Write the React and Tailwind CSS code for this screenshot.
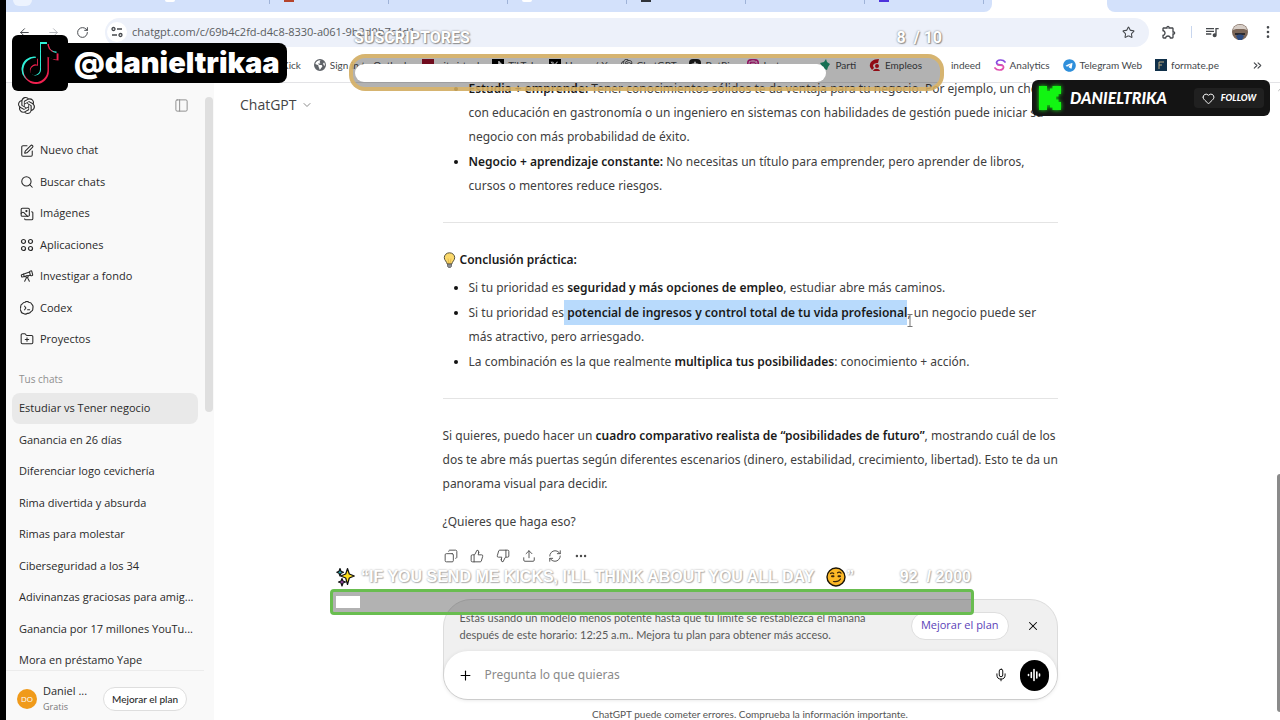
import React, { useState } from 'react';
import {
  ArrowLeft,
  ArrowRight,
  RotateCw,
  Star,
  EllipsisVertical,
  Search,
  SquarePen,
  Images,
  Telescope,
  FolderPlus,
  PanelLeft,
  ChevronDown,
  ChevronUp,
  ChevronsRight,
  Copy,
  ThumbsUp,
  ThumbsDown,
  Upload,
  RefreshCw,
  Ellipsis,
  Plus,
  Mic,
  X,
  Heart,
} from 'lucide-react';
import { FaTiktok, FaXTwitter, FaInstagram, FaTelegram, FaEarthAmericas } from 'react-icons/fa6';
import { SiOpenai } from 'react-icons/si';
import { MdOutlineExtension, MdOutlineQueueMusic } from 'react-icons/md';

const history = [
  'Estudiar vs Tener negocio',
  'Ganancia en 26 días',
  'Diferenciar logo cevichería',
  'Rima divertida y absurda',
  'Rimas para molestar',
  'Ciberseguridad a los 34',
  'Adivinanzas graciosas para amig...',
  'Ganancia por 17 millones YouTu...',
  'Mora en préstamo Yape',
];

function AppsIcon() {
  return (
    <svg className="w-[14px] h-[14px]" viewBox="0 0 14 14" fill="none" stroke="currentColor" strokeWidth="1.2">
      <circle cx="3.5" cy="3.5" r="2" />
      <circle cx="10.5" cy="3.5" r="2" />
      <circle cx="3.5" cy="10.5" r="2" />
      <circle cx="10.5" cy="10.5" r="2" />
    </svg>
  );
}

function CodexIcon() {
  return (
    <svg className="w-[14px] h-[14px]" viewBox="0 0 14 14" fill="none" stroke="currentColor" strokeWidth="1.1" strokeLinecap="round" strokeLinejoin="round">
      <path d="M5 1.2c1-.8 2.800-.8 3.800 0 1.500 0 2.700.8 3.100 2.200 1 .9 1.400 2.400.9 3.700.3 1.500-.4 2.900-1.700 3.500-.7 1.300-2.100 2-3.600 1.700-1.100.9-2.700 1-3.900.2-1.400-.1-2.500-1.200-2.700-2.600C.1 8.900-.1 7.300.7 6.100.5 4.600 1.200 3.200 2.500 2.700 3 1.800 4 1.200 5 1.200z" />
      <path d="M4.600 5.200 5.900 7 4.600 8.800M7.600 8.800h2" />
    </svg>
  );
}

function SettingsIcon() {
  return (
    <svg className="w-3 h-3" viewBox="0 0 12 12" fill="none" stroke="currentColor" strokeWidth="1.3">
      <circle cx="2.5" cy="3" r="1.5" />
      <circle cx="9.5" cy="9" r="1.5" />
      <path d="M6 3h5M1 9h5" />
    </svg>
  );
}

function VoiceIcon() {
  return (
    <svg className="w-[14px] h-[14px]" viewBox="0 0 14 14" stroke="currentColor" strokeWidth="1.6" strokeLinecap="round">
      <path d="M1.500 6.500v1M4.300 4.500v5M7 1.500v11M9.800 4v6M12.500 6v2" />
    </svg>
  );
}

function Bulb() {
  return (
    <svg className="w-[13px] h-4" viewBox="0 0 13 16">
      <path d="M6.500.8C3.400.8 1.300 3 1.300 5.700c0 2.500 2.400 3.800 2.900 6.300h4.600c.5-2.500 2.900-3.800 2.900-6.300C11.700 3 9.600.8 6.500.8z" fill="#fbd96c" stroke="#57523c" strokeWidth="1" />
      <path d="M5 6.500 6 12h1l1-5.500" fill="none" stroke="#d9a437" strokeWidth=".6" />
      <path d="M4.500 12h4v2.200L7.500 15.500h-2L4.500 14.200z" fill="#8b8f92" stroke="#444" strokeWidth=".6" />
    </svg>
  );
}

function Sparkles() {
  return (
    <svg className="w-[19px] h-5" viewBox="0 0 19 20" stroke="#111" strokeWidth="1.2" strokeLinejoin="round">
      <path d="M11.500 1.500 13.300 7l5 2-5 2-1.800 6.500L9.700 11l-5-2 5-2z" fill="#ffe11f" />
      <path d="M4 1.500 5 4.200l2.500 1L5 6.200 4 9 3 6.200.8 5.200 3 4.200z" fill="#35b8c6" />
      <path d="M6 11.500l1 2.500 2.500 1-2.500 1-1 3-1-3-2.500-1 2.500-1z" fill="#b04fc4" />
    </svg>
  );
}

function Smirk() {
  return (
    <svg className="w-5 h-5" viewBox="0 0 20 20">
      <circle cx="10" cy="10" r="9" fill="#fcb826" stroke="#1d1606" strokeWidth="1.4" />
      <g fill="none" stroke="#3b2509" strokeWidth="1.2" strokeLinecap="round">
        <path d="M4.500 6.500c1-.8 2.300-.8 3.200 0M11.500 5.800c1-.8 2.600-.6 3.500.4M7.500 14.500c2.500.5 5.500 0 7-2.500" />
        <path d="M6 9.200h1.500M12.500 9.200h1.500" strokeWidth="2" />
      </g>
    </svg>
  );
}

function KickLogo() {
  return (
    <svg className="w-7 h-7 drop-shadow-[0_0_2px_#16f016]" viewBox="0 0 28 28">
      <path d="M3 2h8v5h3V4.500h2.500V2H25v8h-2.500v2.500H20v3h2.500V18H25v8h-8.500v-2.500H14V21h-3v5H3z" fill="#12f512" />
    </svg>
  );
}

const nav = [
  { label: 'Nuevo chat', icon: <SquarePen size={14} strokeWidth={1.8} /> },
  { label: 'Buscar chats', icon: <Search size={14} strokeWidth={1.8} /> },
  { label: 'Imágenes', icon: <Images size={14} strokeWidth={1.8} className="-scale-x-100" /> },
  { label: 'Aplicaciones', icon: <AppsIcon /> },
  { label: 'Investigar a fondo', icon: <Telescope size={14} strokeWidth={1.8} /> },
  { label: 'Codex', icon: <CodexIcon /> },
  { label: 'Proyectos', icon: <FolderPlus size={14} strokeWidth={1.8} /> },
];

const bookmarks = [
  { label: 'Kick', icon: null },
  { label: 'Sign in to Outlook', icon: <FaEarthAmericas size={12} className="text-[#5f6368]" /> },
  { label: 'nit.virtual', icon: <span className="w-3 h-3 bg-[#a3122c]" /> },
  { label: 'TikTok', icon: <span className="w-3 h-3 bg-black text-white flex items-center justify-center"><FaTiktok size={8} /></span> },
  { label: 'Home / X', icon: <span className="w-3 h-3 bg-black text-white flex items-center justify-center"><FaXTwitter size={9} /></span> },
  { label: 'ChatGPT', icon: <SiOpenai size={12} /> },
  { label: 'BotRix', icon: <span className="w-3 h-3 rounded-sm bg-[#222] text-white flex items-center justify-center"><Star size={8} fill="white" /></span> },
  { label: 'Instagram', icon: <span className="w-3 h-3 rounded-sm bg-[#d0208f] text-white flex items-center justify-center"><FaInstagram size={10} /></span> },
  { label: 'Parti', icon: <svg className="w-3 h-3" viewBox="0 0 12 12"><path d="M1 4 5 3 7 0l1 3 3 2-2 3-1 3-3-1-3-1 1-2z" fill="#21a179" /></svg> },
  { label: 'Empleos', icon: <svg className="w-3 h-3" viewBox="0 0 12 12"><path d="M10 0C4 0 0 3 1 8l2 3 2-2-1-2c0-2 2-3 5-3zM6 7a2 2 0 1 1 4 0 2 2 0 0 1-4 0zM4 12c1-3 6-3 7 0z" fill="#d0121f" /></svg> },
  { label: 'indeed', icon: <span className="w-3 h-3" /> },
  { label: 'Analytics', icon: <svg className="w-3 h-3" viewBox="0 0 12 12" fill="none" strokeWidth="1.7" strokeLinecap="round"><path d="M11 3C9 0 3 .5 2.500 3.500 2.500 6 6 6 8 6" stroke="#8a4be0" /><path d="M4 6c3 0 6 0 5.500 2.500C9 11.500 3 12 1 9" stroke="#e04fae" /></svg> },
  { label: 'Telegram Web', icon: <FaTelegram size={13} className="text-[#2f8fdb]" /> },
  { label: 'formate.pe', icon: <span className="w-3 h-3 bg-[#10304a] flex items-center justify-center"><svg className="w-2 h-2" viewBox="0 0 8 8" fill="none" stroke="#b9a880"><path d="M2 8V1h5M2 4h3" /></svg></span> },
];

// bottoms of the favicons on the background tabs
const tabs = [
  'bg-white rounded-b-full',
  'bg-[#b5442c]',
  'bg-[#d3e1fb]',
  'bg-white rounded-b-full',
  'bg-[#30343a]',
  'bg-[#d3e1fb]',
  'bg-[#4d32dc]',
];

function BrowserChrome() {
  return (
    <header className="shrink-0 border-b border-[#e3e3e6] bg-white text-[#45484c]">
      <div className="flex h-3">
        <div className="w-[986px] shrink-0 flex pl-[7px] rounded-br-lg bg-[#d3e1fb] overflow-hidden">
          <span className="w-6 h-[6px] mr-[127px] rounded-b-full bg-[#edf3fe]" />
          {tabs.map((favicon, i) => (
            <div key={i} className="w-[119px] shrink-0 flex justify-between pl-[6px] pr-2">
              <span className={`w-[10px] h-0.5 ${favicon}`} />
              <span className="w-px h-1 bg-[#9fb3d8]" />
            </div>
          ))}
        </div>
        <div className="w-[115px] bg-white" />
        <div className="flex-1 rounded-bl-lg bg-[#d3e1fb]" />
      </div>
      <div className="flex items-center h-10 pl-3">
        <ArrowLeft size={13} strokeWidth={1.8} />
        <ArrowRight size={13} strokeWidth={1.8} className="ml-4 text-[#b4b7bb]" />
        <RotateCw size={13} strokeWidth={1.8} className="ml-4 mr-4" />
        <div className="flex-1 flex items-center h-[29px] rounded-full bg-[#edf1fa] pl-[2px] pr-[14px]">
          <span className="w-5 h-5 rounded-full bg-white flex items-center justify-center">
            <SettingsIcon />
          </span>
          <input
            aria-label="Dirección"
            className="flex-1 ml-[5px] bg-transparent outline-none text-[11px] text-[#5a5d61]"
            defaultValue="chatgpt.com/c/69b4c2fd-d4c8-8330-a061-9b2d0b7c4d1"
          />
          <Star size={13} strokeWidth={2} />
        </div>
        <MdOutlineExtension size={16} className="ml-3" />
        <span className="w-px h-3 bg-[#c8d6ee] ml-[14px] mr-3" />
        <MdOutlineQueueMusic size={16} />
        <svg className="w-4 h-4 ml-3" viewBox="0 0 16 16">
          <circle cx="8" cy="8" r="8" fill="#7b6658" />
          <path d="M1 6c1-7 13-7 14 0l-3-1H4z" fill="#d6cdc6" />
          <path d="M3 9h10v2H3z" fill="#2c2b30" />
          <path d="M4 12c2-2 6-2 8 0l-2 4H6z" fill="#2d4b80" />
        </svg>
        <EllipsisVertical size={16} className="ml-3 mr-1" />
      </div>
      <div className="flex items-center h-[30px] pb-1 pl-[276px] pr-4">
        <nav className="flex-1 flex items-center justify-between font-['Lato'] text-[10px] leading-4 whitespace-nowrap">
          {bookmarks.map((b) => (
            <a key={b.label} href="#" className="flex items-center gap-1">
              {b.icon}
              {b.label}
            </a>
          ))}
        </nav>
        <ChevronsRight size={13} className="ml-8" />
      </div>
    </header>
  );
}

function Sidebar({ active, onSelect }) {
  return (
    <aside className="w-[208px] shrink-0 flex bg-[#f9f9f9] text-[#2a2a2a]">
      <div className="flex-1 min-w-0 flex flex-col">
        <div className="flex items-center justify-between pt-[14px] pl-3 pr-[15px] mb-[21px]">
          <SiOpenai size={17} />
          <button type="button" aria-label="Cerrar barra lateral" className="text-[#8b8b8b]">
            <PanelLeft size={15} strokeWidth={1.5} />
          </button>
        </div>
        <nav className="grid auto-rows-fr h-[220px] text-[11px] shrink-0">
          {nav.map((item) => (
            <a key={item.label} href="#" className="flex items-center gap-[6px] pl-[14px]">
              {item.icon}
              {item.label}
            </a>
          ))}
        </nav>
        <h2 className="text-[10px] leading-4 text-[#8f8f8f] pl-[13px] mt-4 mb-[6px]">Tus chats</h2>
        <div className="grid grid-cols-1 auto-rows-fr h-[283px] text-[11px] px-[6px] shrink-0">
          {history.map((title) => (
            <button
              key={title}
              type="button"
              onClick={() => onSelect(title)}
              className={`text-left whitespace-nowrap pl-[7px] rounded-lg ${title === active ? 'bg-[#e9e9e9]' : ''}`}
            >
              {title}
            </button>
          ))}
        </div>
        <div className="flex-1 flex items-center border-t border-[#ececec] pt-[7px] pl-[11px] pr-[17px] -mt-[6px] bg-[#f9f9f9]">
          <span className="w-5 h-5 rounded-full bg-[#f09a1a] text-white text-[8px] flex items-center justify-center">DO</span>
          <div className="ml-[6px]">
            <p className="text-[11px] leading-4">Daniel ...</p>
            <p className="text-[9px] leading-4 text-[#777]">Gratis</p>
          </div>
          <button type="button" className="ml-auto h-6 px-2 rounded-full border border-[#dedede] bg-white font-['Lato'] text-[10px] font-medium whitespace-nowrap">
            Mejorar el plan
          </button>
        </div>
      </div>
      <div className="w-[10px] pt-[14px] px-px">
        <div className="h-[315px] rounded-full bg-[#dfdfdf]" />
      </div>
    </aside>
  );
}

function Message() {
  return (
    <article className="font-['Noto_Sans'] text-[12px] leading-6 whitespace-nowrap text-[#404040] [&_strong]:font-semibold [&_strong]:text-[#1a1a1a]">
      <ul className="list-disc pl-[26px] space-y-px marker:text-[#111]">
        <li>
          <strong>Estudia + emprende:</strong> Tener conocimientos sólidos te da ventaja para tu negocio. Por ejemplo, un chef
          <br />
          con educación en gastronomía o un ingeniero en sistemas con habilidades de gestión puede iniciar su
          <br />
          negocio con más probabilidad de éxito.
        </li>
        <li>
          <strong>Negocio + aprendizaje constante:</strong> No necesitas un título para emprender, pero aprender de libros,
          <br />
          cursos o mentores reduce riesgos.
        </li>
      </ul>
      <hr className="border-[#e4e4e4] mt-6 mb-[25px]" />
      <h3 className="flex items-center gap-1 font-semibold text-[#1a1a1a] mb-1">
        <Bulb />
        Conclusión práctica:
      </h3>
      <ul className="list-disc pl-[26px] space-y-px marker:text-[#111]">
        <li>
          Si tu prioridad es <strong>seguridad y más opciones de empleo</strong>, estudiar abre más caminos.
        </li>
        <li>
          Si tu prioridad es
          <mark className="bg-[#b8dafc] py-1"> <strong>potencial de ingresos y control total de tu vida profesional</strong></mark>, un negocio puede ser
          <br />
          más atractivo, pero arriesgado.
        </li>
        <li>
          La combinación es la que realmente <strong>multiplica tus posibilidades</strong>: conocimiento + acción.
        </li>
      </ul>
      <hr className="border-[#e4e4e4] mt-6 mb-[25px]" />
      <p>
        Si quieres, puedo hacer un <strong>cuadro comparativo realista de “posibilidades de futuro”</strong>, mostrando cuál de los
        <br />
        dos te abre más puertas según diferentes escenarios (dinero, estabilidad, crecimiento, libertad). Esto te da un
        <br />
        panorama visual para decidir.
      </p>
      <p className="mt-[14px]">¿Quieres que haga eso?</p>
      <div className="flex items-center gap-3 pl-px mt-[15px] text-[#4d4d4d]">
        <button type="button" aria-label="Copiar"><Copy size={14} strokeWidth={1.6} className="-scale-x-100" /></button>
        <button type="button" aria-label="Buena respuesta"><ThumbsUp size={14} strokeWidth={1.6} /></button>
        <button type="button" aria-label="Mala respuesta"><ThumbsDown size={14} strokeWidth={1.6} /></button>
        <button type="button" aria-label="Compartir"><Upload size={14} strokeWidth={1.6} /></button>
        <button type="button" aria-label="Reintentar"><RefreshCw size={14} strokeWidth={1.6} /></button>
        <button type="button" aria-label="Más"><Ellipsis size={14} strokeWidth={2.2} /></button>
      </div>
    </article>
  );
}

function Composer() {
  const [text, setText] = useState('');

  return (
    <div className="rounded-t-[28px] rounded-b-[25px] border border-[#dcdcdc] bg-[#f0f0f0]">
      <div className="flex items-center h-[51px] pl-4 pr-[17px]">
        <p className="flex-1 font-['Lato'] text-[11px] leading-[17px] whitespace-nowrap text-[#5a5a5a]">
          Estás usando un modelo menos potente hasta que tu límite se restablezca el mañana
          <br />
          después de este horario: 12:25 a.m.. Mejora tu plan para obtener más acceso.
        </p>
        <button type="button" className="h-7 px-[9px] rounded-full border border-[#dedede] bg-white text-[11px] font-medium text-[#5b3fb8] whitespace-nowrap">
          Mejorar el plan
        </button>
        <button type="button" aria-label="Cerrar" className="ml-[17px]">
          <X size={14} strokeWidth={1.8} />
        </button>
      </div>
      <div className="flex items-center h-12 pl-[14px] pr-2 rounded-[24px] bg-white shadow-[0_1px_4px_rgba(0,0,0,0.12)]">
        <Plus size={15} strokeWidth={1.8} />
        <input
          aria-label="Pregunta lo que quieras"
          className="flex-1 ml-3 bg-transparent outline-none font-['Noto_Sans'] text-[12px] placeholder:text-[#8a8a8a]"
          placeholder="Pregunta lo que quieras"
          value={text}
          onChange={(e) => setText(e.target.value)}
        />
        <Mic size={14} strokeWidth={1.6} />
        <button type="button" aria-label="Usar voz" className="ml-3 w-[29px] h-[31px] rounded-full bg-black text-white flex items-center justify-center">
          <VoiceIcon />
        </button>
      </div>
    </div>
  );
}

// Stream widgets that float over the desktop capture
function Overlays() {
  return (
    <>
      <div className="absolute left-3 top-[35px] flex items-center">
        <div className="relative w-14 h-14 rounded-md bg-black flex items-center justify-center">
          <FaTiktok size={40} className="absolute -translate-x-px -translate-y-px text-[#2ff0d8]" />
          <FaTiktok size={40} className="absolute translate-x-px translate-y-px text-[#f0204f]" />
          <FaTiktok size={38} className="absolute text-black" />
        </div>
        <span className="h-10 flex items-center pl-[6px] pr-[7px] rounded-r-lg bg-black text-white font-['Inter'] font-black text-[29px]">
          @danieltrikaa
        </span>
      </div>

      <div className="absolute left-[349px] top-[26px] w-[595px]">
        <div className="flex justify-between pl-[5px] pr-[2px] h-7 font-['Roboto'] font-bold text-[16px] leading-6 text-white [text-shadow:0_0_2px_#777,1px_1px_1px_#999]">
          <span>SUSCRIPTORES</span>
          <span className="whitespace-pre">8  / 10</span>
        </div>
        <div className="h-[37px] rounded-[16px] border-4 border-[#dcb464]/85 bg-black/30 pt-[6px] pl-[2px]">
          <div className="w-[471px] h-[18px] rounded-[9px] bg-white" />
        </div>
      </div>

      <div className="absolute left-[1032px] top-20 h-9 w-[238px] rounded-md bg-[#141414] text-white flex items-center pl-1 pr-[6px] font-['Lato'] font-black italic">
        <KickLogo />
        <span className="ml-[6px] text-[16px]">DANIELTRIKA</span>
        <button type="button" className="ml-auto w-[70px] h-5 rounded bg-[#202020] flex items-center justify-center gap-[6px] text-[9px]">
          <Heart size={13} strokeWidth={1.8} />
          FOLLOW
        </button>
      </div>

      <div className="absolute left-[330px] top-[565px] w-[644px]">
        <div className="flex items-center justify-between pl-[6px] pr-[3px] h-6 font-['Liberation_Sans'] font-bold text-[16px] whitespace-nowrap text-white [text-shadow:0_0_2px_#999,1px_1px_1px_#bbb]">
          <span className="flex items-center">
            <Sparkles />
            <span className="ml-[6px] mr-3">“IF YOU SEND ME KICKS, I'LL THINK ABOUT YOU ALL DAY</span>
            <Smirk />
            <span>”</span>
          </span>
          <span className="whitespace-pre">92  / 2000</span>
        </div>
        <div className="h-[26px] rounded border-[3px] border-[#69bd50] bg-black/30 px-[3px] py-1">
          <div className="w-6 h-3 bg-white" />
        </div>
      </div>

      <svg className="absolute left-[906px] top-[313px] w-2 h-4" viewBox="0 0 8 16" fill="none" stroke="#777">
        <path d="M1.500 1.500h5M4 1.500v12M1.500 13.500h5" />
      </svg>
    </>
  );
}

export default function App() {
  const [active, setActive] = useState(history[0]);

  return (
    <div className="relative h-screen flex overflow-hidden bg-white font-['Open_Sans',sans-serif]">
      <div className="w-[6px] shrink-0 bg-black" />
      <div className="flex-1 min-w-0 flex flex-col">
        <BrowserChrome />
        <div className="flex-1 min-h-0 flex">
          <Sidebar active={active} onSelect={setActive} />
          <main className="relative flex-1 min-w-0 flex flex-col items-center pl-[9px]">
            <button type="button" className="absolute left-[26px] top-3 flex items-center gap-1 text-[14px] leading-5 text-[#444]">
              ChatGPT
              <ChevronDown size={12} className="text-[#8b8b8b]" />
            </button>
            <div className="flex-1 min-h-0 w-full flex flex-col justify-end items-center overflow-hidden pb-9">
              <div className="w-[615px]">
                <Message />
              </div>
            </div>
            <div className="w-[615px] shrink-0">
              <Composer />
              <p className="text-center font-['Lato'] text-[10px] leading-4 text-[#555] pt-[6px] -mb-[2px]">
                ChatGPT puede cometer errores. Comprueba la información importante.
              </p>
            </div>
          </main>
          <div className="w-[3px] flex flex-col justify-between pb-2 overflow-hidden">
            <ChevronUp size={6} className="mt-1 text-[#777]" />
            <div className="h-[238px] rounded-l bg-[#8a8a8a]" />
          </div>
        </div>
      </div>
      <Overlays />
    </div>
  );
}
